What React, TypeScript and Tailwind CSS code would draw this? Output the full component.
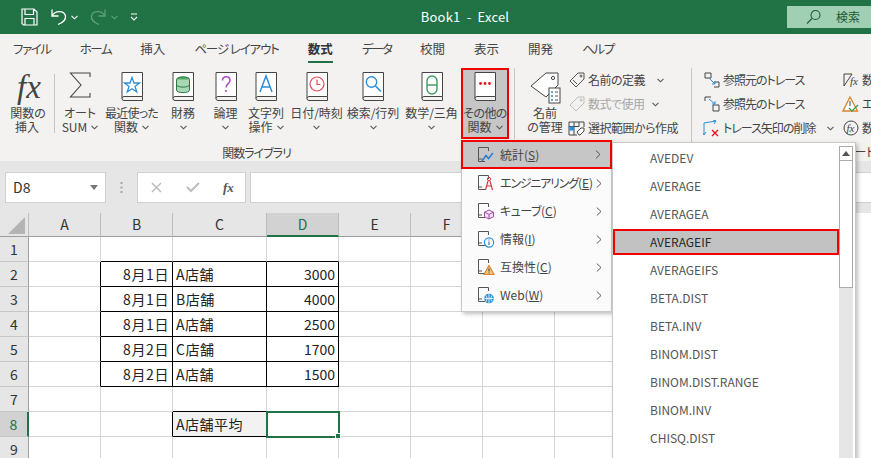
import type { ReactNode } from "react";

const GREEN = "#217346";

function Chevron({ className = "" }: { className?: string }) {
  return (
    <svg width="7" height="5" viewBox="0 0 7 5" className={className}>
      <path d="M0.5 0.8 L3.5 3.8 L6.5 0.8" fill="none" stroke="#555" strokeWidth="1.1" />
    </svg>
  );
}

function Book({ children }: { children?: ReactNode }) {
  return (
    <svg width="22" height="29" viewBox="0 0 22 29">
      <rect x="1" y="0.5" width="20.5" height="25" fill="#fff" />
      <path d="M1 26.5 V0.5 H21.5 V24.5" fill="none" stroke="#444" strokeWidth="1" />
      <path d="M1 26.5 A2 2 0 0 1 3 24.5 H21.5 V28.5 H3 A2 2 0 0 1 1 26.5 Z" fill="#f3f2f1" stroke="#444" />
      {children}
    </svg>
  );
}

function RibbonButton({
  w,
  icon,
  lines,
  active,
}: {
  w: string;
  icon: ReactNode;
  lines: ReactNode[];
  active?: boolean;
}) {
  return (
    <div
      className={`${w} h-[71px] flex flex-col items-center shrink-0 ${active ? "bg-[#c6c6c6] border-2 border-[#f00000]" : ""}`}
    >
      <div className={`flex items-start justify-center ${active ? "h-[36px] pt-[2px]" : "h-[38px] pt-[4px]"}`}>{icon}</div>
      {lines.map((line, i) => (
        <div key={i} className="h-[14px] leading-[14px] flex items-center gap-[4px] whitespace-nowrap">
          {line}
        </div>
      ))}
    </div>
  );
}

function SmallRow({ icon, label, dim, chevronGap }: { icon: ReactNode; label: string; dim?: boolean; chevronGap?: string }) {
  return (
    <div className={`h-[24px] flex items-center gap-[3px] whitespace-nowrap ${dim ? "text-[#a6a6a6]" : ""}`}>
      <span className="w-[17px] h-[17px] flex items-center justify-center shrink-0">{icon}</span>
      <span>{label}</span>
      {chevronGap && <Chevron className={chevronGap} />}
    </div>
  );
}

function MenuIcon({ children }: { children: ReactNode }) {
  return (
    <svg width="18" height="18" viewBox="0 0 18 18" className="shrink-0">
      <path d="M10 1.5 H1.5 V15.5 H8 M1.5 13 H5" fill="none" stroke="#555" strokeWidth="1" />
      <path d="M10 1.5 H11.5 V5" fill="none" stroke="#555" strokeWidth="1" />
      {children}
    </svg>
  );
}

const menuItems: { icon: ReactNode; label: ReactNode }[] = [
  {
    icon: (
      <MenuIcon>
        <path d="M5 15 L9 9.5 L11.5 12.5 L16 7" fill="none" stroke="#2b7cd3" strokeWidth="1.5" />
      </MenuIcon>
    ),
    label: <>統計(<u>S</u>)</>,
  },
  {
    icon: (
      <MenuIcon>
        <circle cx="12" cy="5" r="1.6" fill="none" stroke="#d13438" />
        <path d="M11 7 L8.5 16 M13 7 L15.5 16 M9.5 12 H14.5" fill="none" stroke="#d13438" strokeWidth="1.1" />
      </MenuIcon>
    ),
    label: <><span className="tracking-[-1.2px]">エンジニアリング</span>(<u>E</u>)</>,
  },
  {
    icon: (
      <MenuIcon>
        <path d="M12 8 L16.5 10.2 V14.7 L12 17 L7.5 14.7 V10.2 Z M7.5 10.2 L12 12.4 L16.5 10.2 M12 12.4 V17" fill="#f0e4f5" stroke="#a349a4" strokeWidth="1" />
      </MenuIcon>
    ),
    label: <><span className="tracking-[-0.5px]">キューブ</span>(<u>C</u>)</>,
  },
  {
    icon: (
      <MenuIcon>
        <circle cx="12" cy="12.5" r="4.6" fill="#fff" stroke="#2b8fd8" strokeWidth="1.2" />
        <path d="M12 11.5 V15 M12 9.6 V10.6" stroke="#2b6fb8" strokeWidth="1.2" />
      </MenuIcon>
    ),
    label: <>情報(<u>I</u>)</>,
  },
  {
    icon: (
      <MenuIcon>
        <path d="M12 7.5 L17 16.5 H7 Z" fill="#f7c67c" stroke="#d9822b" strokeWidth="1.1" />
        <path d="M12 10.5 V13.5 M12 14.4 V15.4" stroke="#333" strokeWidth="1" />
      </MenuIcon>
    ),
    label: <>互換性(<u>C</u>)</>,
  },
  {
    icon: (
      <MenuIcon>
        <circle cx="12" cy="12.5" r="4.8" fill="#2b8fd8" />
        <path d="M7.5 12.5 H16.5 M12 8 V17 M9 9.5 C10.5 12 10.5 13 9 15.5 M15 9.5 C13.5 12 13.5 13 15 15.5" fill="none" stroke="#fff" strokeWidth="0.8" />
      </MenuIcon>
    ),
    label: <>Web(<u>W</u>)</>,
  },
];

const subItems = [
  "AVEDEV",
  "AVERAGE",
  "AVERAGEA",
  "AVERAGEIF",
  "AVERAGEIFS",
  "BETA.DIST",
  "BETA.INV",
  "BINOM.DIST",
  "BINOM.DIST.RANGE",
  "BINOM.INV",
  "CHISQ.DIST",
];

const columns = ["A", "B", "C", "D", "E", "F", "G", "H", "I", "J", "K"];
const rows = [1, 2, 3, 4, 5, 6, 7, 8, 9];

const cells: Record<string, string> = {
  B2: "8月1日", C2: "A店舗", D2: "3000",
  B3: "8月1日", C3: "B店舗", D3: "4000",
  B4: "8月1日", C4: "A店舗", D4: "2500",
  B5: "8月2日", C5: "C店舗", D5: "1700",
  B6: "8月2日", C6: "A店舗", D6: "1500",
  C8: "A店舗平均",
};

function Cell({ col, row }: { col: string; row: number }) {
  const inTable = row >= 2 && row <= 6;
  const blackRight = (inTable && "ABCD".includes(col)) || (row === 8 && "BC".includes(col));
  const blackBottom = (row >= 1 && row <= 6 && "BCD".includes(col)) || ((row === 7 || row === 8) && col === "C");
  const selected = col === "D" && row === 8;
  return (
    <div
      className={`relative border-r border-b px-[3px] flex items-center text-[14px] text-[#222] whitespace-nowrap ${
        blackRight ? "border-r-black" : "border-r-[#d4d4d4]"
      } ${blackBottom ? "border-b-black" : "border-b-[#d4d4d4]"} ${
        col === "C" ? "justify-start tracking-[0.5px]" : "justify-end"
      } ${col === "B" ? "tracking-[0.6px]" : ""} ${col === "C" && row === 8 ? "bg-[#f2f2f2]" : "bg-white"} ${selected ? "z-10" : ""}`}
    >
      {cells[`${col}${row}`]}
      {selected && (
        <div className="absolute -left-[1px] -top-[1px] -right-[2px] -bottom-[2px] border-2 border-[#217346]">
          <div className="absolute -right-[3px] -bottom-[3px] w-[6px] h-[6px] bg-[#217346] border border-white" />
        </div>
      )}
    </div>
  );
}

export default function App() {
  return (
    <div className="relative w-[871px] h-[458px] overflow-hidden bg-white font-['Noto_Sans_CJK_JP','Liberation_Sans',sans-serif] text-[#444]">
      {/* title bar */}
      <div className="h-[34px] flex items-center text-white" style={{ backgroundColor: GREEN }}>
        <div className="w-[143px] shrink-0 pl-[21px] flex items-center">
          <svg width="17" height="18" viewBox="0 0 17 18" fill="none" stroke="#fff" strokeWidth="1.2">
            <path d="M1 1 H13 L16 4 V17 H2.5 L1 15.5 Z M4 1 V6.5 H12.5 V1 M4 17 V10.5 H13 V17" />
          </svg>
          <svg width="17" height="18" viewBox="0 0 17 18" fill="none" stroke="#fff" strokeWidth="1.3" className="ml-[12px]">
            <path d="M2 1.5 V8 H8.5 M2 8 C5 2.5 14 2 15.5 8 C16 12 12 15 8 16.5" />
          </svg>
          <Chevron className="ml-[4px] [&_path]:stroke-white" />
          <svg width="17" height="18" viewBox="0 0 17 18" fill="none" stroke="#5f9f7c" strokeWidth="1.3" className="ml-[12px]">
            <path d="M15 1.5 V8 H8.5 M15 8 C12 2.5 3 2 1.5 8 C1 12 5 15 9 16.5" />
          </svg>
          <Chevron className="ml-[4px] [&_path]:stroke-[#5f9f7c]" />
          <svg width="8" height="8" viewBox="0 0 8 8" fill="none" stroke="#fff" strokeWidth="1.1" className="ml-[12px]">
            <path d="M1 1 H7 M1 4 L4 7 L7 4" />
          </svg>
        </div>
        <div className="w-[644px] text-center text-[13px] tracking-[0.2px]">Book1&nbsp; -&nbsp; Excel</div>
        <div className="flex-1 h-[22px] bg-[#a0cfb3] flex items-center pl-[19px] text-[#1d5b38] text-[12px]">
          <svg width="16" height="16" viewBox="0 0 16 16" fill="none" stroke="#1d5b38" strokeWidth="1.1">
            <circle cx="9.5" cy="6" r="4.5" />
            <path d="M6 9.5 L1 14.5" />
          </svg>
          <span className="ml-[14px]">検索</span>
        </div>
      </div>

      {/* tabs */}
      <div className="h-[32px] bg-[#f3f2f1] flex items-start pt-[6px] pl-[13px] gap-[29px] text-[12.5px] leading-[18px] [font-feature-settings:'palt'] text-[#444]">
        <span className="tracking-[-1.4px]">ファイル</span>
        <span className="tracking-[-1.4px]">ホーム</span>
        <span>挿入</span>
        <span className="tracking-[-1.1px]">ページ レイアウト</span>
        <span className="relative font-bold text-[#333]">
          数式
          <span className="absolute left-0 right-0 top-[21px] h-[2px] bg-[#217346]" />
        </span>
        <span className="tracking-[-1.9px]">データ</span>
        <span>校閲</span>
        <span>表示</span>
        <span>開発</span>
        <span className="tracking-[-1.4px]">ヘルプ</span>
      </div>

      {/* ribbon */}
      <div className="h-[95px] bg-[#f3f2f1] flex items-start pt-[2px] text-[12px] [font-feature-settings:'palt'] text-[#444] overflow-hidden">
        <div className="w-[514px] shrink-0 flex flex-col items-center">
          <div className="w-full flex items-start">
            <RibbonButton
              w="w-[54px]"
              icon={<span className="ml-[4px] font-['Liberation_Serif',serif] italic text-[33px] leading-[30px] text-[#444] [font-feature-settings:normal]">fx</span>}
              lines={[<span className="ml-[2px]">関数の</span>, "挿入"]}
            />
            <div className="w-px h-[59px] mt-[6px] bg-[#c8c6c4] shrink-0" />
            <RibbonButton
              w="w-[50px]"
              icon={
                <svg width="22" height="26" viewBox="0 0 22 26" fill="none" stroke="#444" strokeWidth="1.1">
                  <path d="M21 5 V1 H1.5 L12 13 L1.5 25 H21 V21" />
                </svg>
              }
              lines={["オート", <>SUM <Chevron /></>]}
            />
            <RibbonButton
              w="w-[53px]"
              icon={
                <Book>
                  <path d="M11 5.5 L13 11 L18.5 11 L14 14.5 L15.8 20 L11 16.8 L6.2 20 L8 14.5 L3.5 11 L9 11 Z" fill="#fff" stroke="#2b8fd8" strokeWidth="1.3" />
                </Book>
              }
              lines={[<span className="tracking-[-0.8px]">最近使った</span>, <>関数 <Chevron /></>]}
            />
            <RibbonButton
              w="w-[50px]"
              icon={
                <Book>
                  <ellipse cx="11" cy="7.5" rx="6.5" ry="2.7" fill="#4ea866" stroke="#2d7a46" />
                  <path d="M4.5 7.5 V18 C4.5 21.5 17.5 21.5 17.5 18 V7.5 M4.5 12.5 C4.5 16 17.5 16 17.5 12.5" fill="#a9d7b6" stroke="#2d7a46" />
                </Book>
              }
              lines={["財務", <Chevron />]}
            />
            <RibbonButton
              w="w-[35px]"
              icon={
                <Book>
                  <path d="M7.5 8.5 C7.5 3.5 15 3.5 15 8.5 C15 11.5 11 12 11 15.5 M11 18 V20" fill="none" stroke="#b04fc4" strokeWidth="1.6" />
                </Book>
              }
              lines={["論理", <Chevron />]}
            />
            <RibbonButton
              w="w-[46px]"
              icon={
                <Book>
                  <path d="M5 20 L11 4 L17 20 M7 15 H15" fill="none" stroke="#2b8fd8" strokeWidth="1.5" />
                </Book>
              }
              lines={["文字列", <>操作 <Chevron /></>]}
            />
            <RibbonButton
              w="w-[55px]"
              icon={
                <Book>
                  <circle cx="11" cy="12" r="7" fill="#fff" stroke="#e74856" strokeWidth="1.2" />
                  <path d="M11 7.5 V12.5 H14.5" fill="none" stroke="#e74856" strokeWidth="1.2" />
                </Book>
              }
              lines={["日付/時刻", <Chevron />]}
            />
            <RibbonButton
              w="w-[58px]"
              icon={
                <Book>
                  <circle cx="9.5" cy="10" r="5.2" fill="#fff" stroke="#2b8fd8" strokeWidth="1.4" />
                  <path d="M13.5 14 L19 19.5" stroke="#2b8fd8" strokeWidth="1.6" />
                </Book>
              }
              lines={["検索/行列", <Chevron />]}
            />
            <RibbonButton
              w="w-[59px]"
              icon={
                <Book>
                  <rect x="6" y="4" width="10" height="18" rx="5" fill="none" stroke="#3d9a5b" strokeWidth="1.4" />
                  <path d="M6 13 H16" stroke="#3d9a5b" strokeWidth="1.4" />
                </Book>
              }
              lines={["数学/三角", <Chevron />]}
            />
            <RibbonButton
              active
              w="w-[48px]"
              icon={
                <Book>
                  <circle cx="6.5" cy="11.5" r="1.4" fill="#e81123" />
                  <circle cx="11" cy="11.5" r="1.4" fill="#e81123" />
                  <circle cx="15.5" cy="11.5" r="1.4" fill="#e81123" />
                </Book>
              }
              lines={[<span className="tracking-[-0.6px]">その他の</span>, <>関数 <Chevron /></>]}
            />
            <div className="w-px h-[71px] ml-[5px] bg-[#c8c6c4] shrink-0" />
          </div>
          <div className="h-[20px] mt-[4px] leading-[20px] pr-[1px] tracking-[-1px]">関数ライブラリ</div>
        </div>

        <div className="w-[177px] shrink-0 flex items-start">
          <RibbonButton
            w="w-[46px] ml-[8px]"
            icon={
              <svg width="32" height="32" viewBox="0 0 32 32" fill="none" stroke="#444" strokeWidth="1">
                <path d="M17 1 H29 V13 L17 25 L2 14 Z" fill="#fff" />
                <circle cx="24" cy="6" r="1.6" />
                <rect x="20" y="16" width="11" height="15" fill="#fff" />
                <path d="M22 20 H24 M22 24 H24 M22 28 H24" stroke="#2b8fd8" strokeWidth="1.6" />
                <path d="M26 20 H29 M26 24 H29 M26 28 H29" stroke="#555" />
              </svg>
            }
            lines={["名前", "の管理"]}
          />
          <div className="flex flex-col tracking-[-0.5px]">
            <SmallRow
              chevronGap="ml-[9px]"
              label="名前の定義"
              icon={
                <svg width="16" height="16" viewBox="0 0 16 16" fill="none" stroke="#555">
                  <path d="M9 1 H15 V7 L7 15 L1 9 Z M4 8 L8 12" />
                  <circle cx="12" cy="4" r="1" />
                </svg>
              }
            />
            <SmallRow
              dim
              chevronGap="ml-[4px]"
              label="数式で使用"
              icon={
                <svg width="16" height="16" viewBox="0 0 16 16" fill="none" stroke="#bdbdbd">
                  <path d="M9 1 H15 V7 L7 15 L1 9 Z" />
                  <circle cx="12" cy="4" r="1" />
                </svg>
              }
            />
            <SmallRow
              label="選択範囲から作成"
              icon={
                <svg width="17" height="15" viewBox="0 0 17 15" fill="none" stroke="#444">
                  <path d="M1 1 H16 V6 M1 1 V14 H9 M1 5.5 H11 M6 1 V14 M11 1 V5.5" />
                  <rect x="1.5" y="5.5" width="4.5" height="4" fill="#2b8fd8" stroke="none" />
                  <path d="M11 14 L9 11 L13 7 H16 V10 L12 14 Z" fill="#fff" />
                </svg>
              }
            />
          </div>
        </div>

        <div className="w-px h-[74px] bg-[#c8c6c4] shrink-0" />

        <div className="w-[326px] shrink-0 flex flex-col items-center">
          <div className="w-full flex items-start">
            <div className="w-[150px] shrink-0 pl-[11px] flex flex-col tracking-[-1px]">
              <SmallRow
                label="参照元のトレース"
                icon={
                  <svg width="16" height="16" viewBox="0 0 16 16" fill="none" stroke="#444">
                    <path d="M1 1 H7 V6 H1 Z M10 10 H15 V15 H10" />
                    <path d="M5 6 L11 12 M11 9 V12 H8" stroke="#2b8fd8" />
                  </svg>
                }
              />
              <SmallRow
                label="参照先のトレース"
                icon={
                  <svg width="16" height="16" viewBox="0 0 16 16" fill="none" stroke="#444">
                    <path d="M1 1 H7 M1 1 V5 M9 9 H15 V15 H9 Z" />
                    <path d="M5 3 L11 8 M11 5 V8 H8" stroke="#2b8fd8" />
                  </svg>
                }
              />
              <SmallRow
                chevronGap="ml-[9px]"
                label="トレース矢印の削除"
                icon={
                  <svg width="17" height="17" viewBox="0 0 17 17" fill="none" stroke="#2b8fd8">
                    <path d="M1 15 V3 L13 1 M1 15 L-1 12 M1 15 L3 12 M13 1 L10 0 M13 1 L11 4" />
                    <path d="M9 10 L15 16 M15 10 L9 16" stroke="#e81123" strokeWidth="1.4" />
                  </svg>
                }
              />
            </div>
            <div className="flex flex-col">
              <SmallRow
                label="数式の表示"
                icon={
                  <svg width="16" height="16" viewBox="0 0 16 16" fill="none" stroke="#444">
                    <path d="M1 2 H9 L1 14 V2 Z" />
                    <text x="7" y="13" fontFamily="'Liberation Serif', serif" fontStyle="italic" fontSize="11" fill="#444" stroke="none">fx</text>
                  </svg>
                }
              />
              <SmallRow
                label="エラー チェック"
                icon={
                  <svg width="17" height="16" viewBox="0 0 17 16" fill="none">
                    <path d="M8 1 L15.5 15 H1 Z" fill="#fff" stroke="#d9822b" strokeWidth="1.3" />
                    <path d="M8 5 V10" stroke="#444" />
                    <path d="M7 12 L10 15 L16 9" stroke="#3d9a5b" strokeWidth="1.3" />
                  </svg>
                }
              />
              <SmallRow
                label="数式の検証"
                icon={
                  <svg width="16" height="16" viewBox="0 0 16 16" fill="none" stroke="#444">
                    <circle cx="8" cy="8" r="7" />
                    <text x="3.5" y="12" fontFamily="'Liberation Serif', serif" fontStyle="italic" fontSize="11" fill="#444" stroke="none">fx</text>
                  </svg>
                }
              />
            </div>
          </div>
          <div className="h-[20px] mt-[2px] leading-[20px] whitespace-nowrap tracking-[-0.5px]">ワークシート分析</div>
        </div>
      </div>

      {/* formula bar */}
      <div className="h-[52px] bg-[#e6e6e6] flex items-start pt-[11px]">
        <div className="ml-[5px] w-[101px] h-[31px] bg-white border border-[#d0d0d0] flex items-center justify-between pl-[7px] pr-[7px] text-[14px] text-[#333]">
          D8
          <svg width="8" height="5" viewBox="0 0 8 5"><path d="M0 0 H8 L4 5 Z" fill="#777" /></svg>
        </div>
        <div className="w-[31px] h-[31px] flex items-center justify-center">
          <svg width="3" height="11" viewBox="0 0 3 11"><path d="M0.5 0 H2.5 V2 H0.5 Z M0.5 4.5 H2.5 V6.5 H0.5 Z M0.5 9 H2.5 V11 H0.5 Z" fill="#a6a6a6" /></svg>
        </div>
        <div className="w-[109px] h-[31px] bg-white border border-[#d0d0d0] flex items-center pl-[13px]">
          <svg width="11" height="11" viewBox="0 0 11 11" fill="none" stroke="#bdbdbd" strokeWidth="1.5"><path d="M1 1 L10 10 M10 1 L1 10" /></svg>
          <svg width="14" height="11" viewBox="0 0 14 11" fill="none" stroke="#bdbdbd" strokeWidth="2" className="ml-[24px]"><path d="M1 5 L5 9 L13 1" /></svg>
          <span className="ml-[23px] font-['Liberation_Serif',serif] italic font-bold text-[13px] leading-none text-[#555]">fx</span>
        </div>
        <div className="ml-[4px] flex-1 h-[31px] bg-white border-y border-l border-[#d0d0d0]" />
      </div>

      {/* sheet */}
      <div className="grid grid-cols-[29px_72px_72px_94px_72px_72px_72px_72px_72px_72px_72px_72px] grid-rows-[24px_repeat(9,25px)]">
        <div className="relative bg-[#e6e6e6] border-r border-b border-r-[#bdbdbd] border-b-[#9e9e9e]">
          <svg width="17" height="17" viewBox="0 0 17 17" className="absolute left-[8px] top-[4px]"><path d="M17 0 V17 H0 Z" fill="#b4b4b4" /></svg>
        </div>
        {columns.map((c) => (
          <div
            key={c}
            className={`flex items-center justify-center text-[14px] border-r border-r-[#bdbdbd] ${
              c === "D" ? "bg-[#d2d2d2] border-b-2 border-b-[#217346] text-[#217346]" : "bg-[#e6e6e6] border-b border-b-[#9e9e9e] text-[#333]"
            }`}
          >
            {c}
          </div>
        ))}
        {rows.map((r) => (
          <div key={r} className="contents">
            <div
              className={`flex items-center justify-center text-[14px] border-b border-b-[#c8c8c8] ${
                r === 8 ? "bg-[#d2d2d2] border-r-2 border-r-[#217346] text-[#217346]" : "bg-[#e6e6e6] border-r border-r-[#9e9e9e] text-[#333]"
              }`}
            >
              {r}
            </div>
            {columns.map((c) => (
              <Cell key={c} col={c} row={r} />
            ))}
          </div>
        ))}
      </div>

      {/* more functions menu */}
      <div className="absolute z-20 left-[461px] top-[140px] w-[151px] h-[172px] bg-[#fbfbfb] border border-[#c8c8c8] shadow-[2px_2px_4px_rgba(0,0,0,0.25)] text-[12px] text-[#444] [font-feature-settings:'palt']">
        {menuItems.map((item, i) => (
          <div
            key={i}
            className={`flex items-center pr-[9px] whitespace-nowrap ${
              i === 0 ? "h-[29px] pl-[14px] bg-[#c6c6c6] -mx-px -mt-px border-2 border-[#f00000]" : "h-[28px] pl-[15px]"
            }`}
          >
            {item.icon}
            <span className="ml-[5px] flex-1">{item.label}</span>
            <svg width="6" height="9" viewBox="0 0 6 9" fill="none" stroke="#555"><path d="M0.8 0.5 L5 4.5 L0.8 8.5" /></svg>
          </div>
        ))}
      </div>

      {/* function list */}
      <div className="absolute z-20 left-[612px] top-[142px] w-[244px] h-[322px] bg-white border border-[#c8c8c8] shadow-[2px_2px_4px_rgba(0,0,0,0.25)] flex text-[12px] text-[#555]">
        <div className="flex-1 overflow-hidden pt-[1px]">
          {subItems.map((name) => (
            <div
              key={name}
              className={`flex items-center ${
                name === "AVERAGEIF" ? "h-[26px] my-px pl-[35px] bg-[#c2c2c2] border-2 border-[#f00000] text-[#262626]" : "h-[28px] pl-[37px]"
              }`}
            >
              {name}
            </div>
          ))}
        </div>
        <div className="w-[14px] mt-[3px] mr-[2px] shrink-0 flex flex-col bg-[#e6e6e6]">
          <div className="h-[15px] bg-white border border-[#ababab] flex items-center justify-center">
            <svg width="8" height="5" viewBox="0 0 8 5"><path d="M4 0 L8 5 H0 Z" fill="#555" /></svg>
          </div>
          <div className="h-[127px] bg-white border border-[#ababab] border-t-0" />
        </div>
      </div>
    </div>
  );
}
